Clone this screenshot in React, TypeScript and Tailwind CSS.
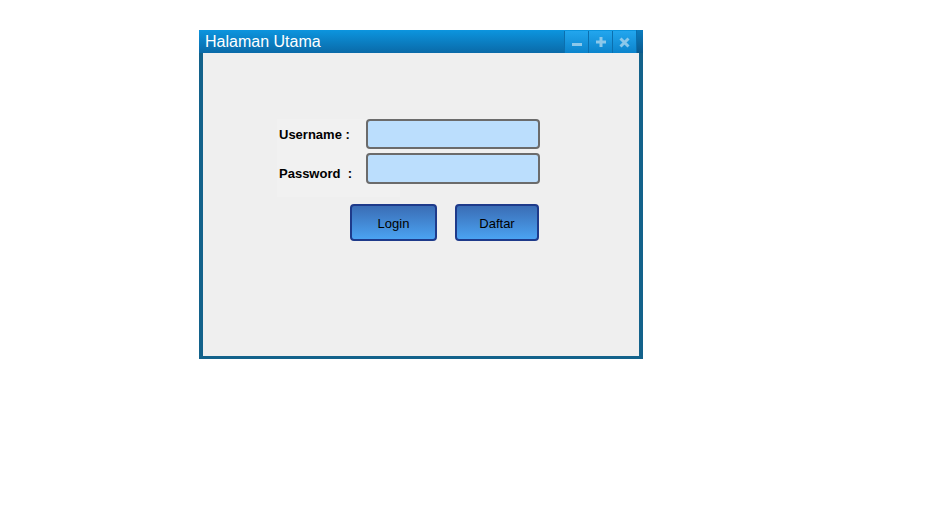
import React from 'react';

function TitleButton({ children }: { children: React.ReactNode }) {
  return (
    <div className="w-[24px] h-full flex items-center justify-center border-l border-[#0b6fae] bg-gradient-to-b from-[#22a6ee] to-[#0b84cc]">
      {children}
    </div>
  );
}

export default function App() {
  return (
    <div className="w-[940px] h-[519px] bg-white pt-[30px] pl-[199px]" style={{ fontFamily: '"Liberation Sans", Arial, sans-serif' }}>
      <div className="w-[444px] h-[329px] bg-[#13628b] flex flex-col">
        {/* Title bar */}
        <div className="h-[23px] flex bg-gradient-to-b from-[#0c95df] to-[#0a6aa8]">
          <div className="flex-1 pl-[6px] text-white text-[16px] leading-[23px]">Halaman Utama</div>
          <div className="flex h-[23px] pt-[1px]">
            <TitleButton>
              <svg width="10" height="10" viewBox="0 0 10 10">
                <rect x="0" y="6" width="10" height="3" fill="#8cc8ea" />
              </svg>
            </TitleButton>
            <TitleButton>
              <svg width="10" height="10" viewBox="0 0 10 10">
                <rect x="0" y="3.5" width="10" height="3" fill="#8cc8ea" />
                <rect x="3.5" y="0" width="3" height="10" fill="#8cc8ea" />
              </svg>
            </TitleButton>
            <TitleButton>
              <svg width="11" height="11" viewBox="0 0 11 11">
                <path d="M1.5 1.5 L9.5 9.5 M9.5 1.5 L1.5 9.5" stroke="#8cc8ea" strokeWidth="3" />
              </svg>
            </TitleButton>
          </div>
          <div className="w-[7px] border-l border-[#0b6fae] bg-gradient-to-b from-[#0b7cc0] to-[#0a5a8e]" />
        </div>
        {/* Body */}
        <div className="flex-1 mx-[4px] mb-[3px] bg-[#efefef] pt-[66px] pl-[74px]">
          <div className="flex">
            <div className="w-[123px] h-[78px] bg-[#f1f1f1] text-[13px] font-bold text-black pl-[2px]">
              <div className="h-[34px] pt-[8px] leading-[16px]">Username :</div>
              <div className="pt-[13px] leading-[16px] whitespace-pre">Password  :</div>
            </div>
            <div className="flex flex-col gap-[4px] -ml-[34px]">
              <div className="w-[174px] h-[30px] rounded-[4px] border-2 border-[#6b6b6b] bg-[#bbdefd]" />
              <div className="w-[174px] h-[31px] rounded-[4px] border-2 border-[#6b6b6b] bg-[#bbdefd]" />
            </div>
          </div>
          <div className="flex gap-[18px] ml-[73px] mt-[7px]">
            <button className="w-[87px] h-[37px] pt-[2px] rounded-[4px] border-2 border-[#1e3a8a] bg-gradient-to-b from-[#3a6db5] to-[#4ba3f2] text-[13px] text-black">
              Login
            </button>
            <button className="w-[84px] h-[37px] pt-[2px] rounded-[4px] border-2 border-[#1e3a8a] bg-gradient-to-b from-[#3a6db5] to-[#4ba3f2] text-[13px] text-black">
              Daftar
            </button>
          </div>
        </div>
      </div>
    </div>
  );
}
